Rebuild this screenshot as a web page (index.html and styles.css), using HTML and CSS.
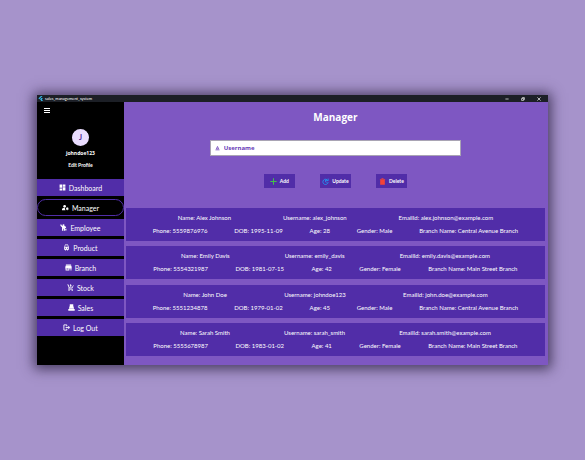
FILE: index.html
```html
<!DOCTYPE html>
<html lang="en">
<head>
<meta charset="utf-8">
<title>sales_management_system</title>
<link rel="stylesheet" href="styles.css">
</head>
<body>
<div class="window">
  <header class="titlebar">
    <svg class="logo" viewBox="0 0 12 12"><path d="M1 6 7 0h4L3 8zM5 8l3-3h4L9 8l3 4H8z" fill="#35b8e8"/></svg>
    <span class="app-name">sales_management_system</span>
    <button class="win-btn" aria-label="Minimize"><svg viewBox="0 0 10 10"><path d="M1 5h8"/></svg></button>
    <button class="win-btn" aria-label="Restore"><svg viewBox="0 0 10 10"><path d="M1.500 3.500h5v5h-5zM3.500 3.500v-2h5v5h-2"/></svg></button>
    <button class="win-btn" aria-label="Close"><svg viewBox="0 0 10 10"><path d="m1 1 8 8M9 1 1 9"/></svg></button>
  </header>
  <div class="body">
    <aside class="sidebar">
      <button class="menu" aria-label="Menu"><svg viewBox="0 0 18 15"><path d="M0 0h18v3H0zM0 6h18v3H0zM0 12h18v3H0z"/></svg></button>
      <div class="profile">
        <div class="avatar">J</div>
        <div class="user">johndoe123</div>
        <a class="edit" href="#">Edit Profile</a>
      </div>
      <nav class="nav">
        <a href="#"><svg viewBox="0 0 24 24"><path d="M2 2h9v11H2zM2 15h9v7H2zM13 2h9v7h-9zM13 11h9v11h-9z"/></svg>Dashboard</a>
        <a href="#" class="active"><svg viewBox="0 0 24 24"><circle cx="9" cy="8" r="4.500"/><path d="M0 21v-3c0-3 5-5 10-5 0 3 0 6 2 8zM17 11h2l.5 2 2-.5 1 2-1.500 1.500 1.500 1.500-1 2-2-.5-.5 2h-2l-.5-2-2 .5-1-2 1.500-1.500-1.500-1.500 1-2 2 .5z"/></svg>Manager</a>
        <a href="#"><svg viewBox="0 0 24 24"><circle cx="12" cy="4" r="3.500"/><path d="M1 2h4c0 3 2 5 5 5h5c4 0 6 3 6 7h-3l-1-2v11h-4v-7h-2v7H7V11C4 10 1 7 1 2zM18 16h4v6h-4z"/></svg>Employee</a>
        <a href="#"><svg viewBox="0 0 24 24"><path fill-rule="evenodd" d="M7 2h10l3 9v9h-3v2h-3v-2h-4v2H7v-2H4v-9zM8 4l-1 5h10l-1-5zM7 13v3h3v-3zm7 0v3h3v-3z"/></svg>Product</a>
        <a href="#"><svg viewBox="0 0 24 24"><path fill-rule="evenodd" d="M3 2h18v3H3zM2 6h20l1 6v3h-1v7H2v-7H1v-3zM5 15v4h7v-4zM15 15v7h4v-7z"/></svg>Branch</a>
        <a href="#"><svg viewBox="0 0 24 24"><path d="M1 2h4l4 10h8l4-8 2 1-5 10H8l-1 2h13v2H4l2-5L3 4H1zM11 1h3v4h3l-4 5-4-5h2z"/><circle cx="7" cy="21" r="2.500"/><circle cx="18" cy="21" r="2.500"/></svg>Stock</a>
        <a href="#"><svg viewBox="0 0 24 24"><path d="M6 1h12v5l3 10H3L6 6zM1 17h22v6H1z"/></svg>Sales</a>
        <a href="#"><svg viewBox="0 0 24 24"><path class="door" d="M13 3H3v18h10v-5M13 8V3M9 12h13M18 7l5 5-5 5"/></svg>Log Out</a>
      </nav>
    </aside>
    <main class="main">
      <h1>Manager</h1>
      <label class="search">
        <svg viewBox="0 0 24 24"><path d="M2 21h20M6 17l6-13 6 13zM9 12h6" fill="none" stroke="#673ab7" stroke-width="3"/></svg>
        <input type="text" placeholder="Username" aria-label="Username">
      </label>
      <div class="actions">
        <button><svg viewBox="0 0 21 21"><path d="M9 1h3v8h8v3h-8v8H9v-8H1V9h8z" fill="#43c04a"/></svg>Add</button>
        <button><svg viewBox="0 0 24 24"><path d="M21 2v7h-7M20 9a9 9 0 1 0 1 5M12 7v6l4 2" fill="none" stroke="#2196f3" stroke-width="3"/></svg>Update</button>
        <button><svg viewBox="0 0 24 24"><path d="M9 1h6l1 2h5v3H3V3h5zM4 7h16v16H4z" fill="#f44336"/></svg>Delete</button>
      </div>
      <section class="list">
        <article class="card">
          <div class="row"><span>Name: Alex Johnson</span><span>Username: alex_johnson</span><span>EmailId: alex.johnson@example.com</span></div>
          <div class="row"><span>Phone: 5559876976</span><span>DOB: 1995-11-09</span><span>Age: 28</span><span>Gender: Male</span><span>Branch Name: Central Avenue Branch</span></div>
        </article>
        <article class="card">
          <div class="row"><span>Name: Emily Davis</span><span>Username: emily_davis</span><span>EmailId: emily.davis@example.com</span></div>
          <div class="row"><span>Phone: 5554321987</span><span>DOB: 1981-07-15</span><span>Age: 42</span><span>Gender: Female</span><span>Branch Name: Main Street Branch</span></div>
        </article>
        <article class="card">
          <div class="row"><span>Name: John Doe</span><span>Username: johndoe123</span><span>EmailId: john.doe@example.com</span></div>
          <div class="row"><span>Phone: 5551234878</span><span>DOB: 1979-01-02</span><span>Age: 45</span><span>Gender: Male</span><span>Branch Name: Central Avenue Branch</span></div>
        </article>
        <article class="card">
          <div class="row"><span>Name: Sarah Smith</span><span>Username: sarah_smith</span><span>EmailId: sarah.smith@example.com</span></div>
          <div class="row"><span>Phone: 5555678987</span><span>DOB: 1983-01-02</span><span>Age: 41</span><span>Gender: Female</span><span>Branch Name: Main Street Branch</span></div>
        </article>
      </section>
    </main>
  </div>
</div>
</body>
</html>
```
FILE: styles.css
```css
* { box-sizing: border-box; }
body {
  margin: 0;
  min-height: 100vh;
  padding: 95px 37px;
  display: flex;
  background: #a693cb;
  font-family: Lato, "Open Sans", sans-serif;
  font-size: 6px;
  line-height: 8px;
  color: #fff;
}
button, input { font: inherit; color: inherit; border: 0; padding: 0; background: none; }
a { color: inherit; text-decoration: none; }
svg { display: block; fill: #fff; flex: none; }
.window {
  flex: 1;
  display: flex;
  flex-direction: column;
  box-shadow: 0 1px 12px 3px rgba(30, 20, 50, 0.7);
}
.titlebar {
  display: flex;
  align-items: center;
  height: 7px;
  padding: 0 6px 0 1px;
  background: #1c1f26;
}
.logo { width: 5px; height: 5px; }
.app-name { flex: 1; margin-left: 2px; font-size: 4px; line-height: 7px; }
.win-btn { width: 5px; margin-left: 11px; }
.win-btn svg { width: 4px; height: 4px; fill: none; stroke: #ddd; stroke-width: 2; }
.body { flex: 1; display: flex; }
.sidebar { flex: 0 0 17%; background: #000; padding-top: 6px; }
.menu { display: block; margin-left: 7px; }
.menu svg { width: 6px; height: 5px; }
.profile {
  padding-top: 16px;
  text-align: center;
  font-weight: 700;
  font-size: 5px;
}
.avatar {
  width: 17px;
  height: 17px;
  margin: 0 auto 3px;
  border-radius: 50%;
  background: #eaddff;
  color: #4a2094;
  font-size: 7px;
  line-height: 17px;
}
.user { font-family: "Open Sans", sans-serif; }
.edit { display: block; margin-top: 4px; }
.nav { display: flex; flex-direction: column; gap: 3px; margin-top: 10px; }
.nav a {
  display: flex;
  align-items: center;
  justify-content: center;
  gap: 3px;
  height: 17px;
  background: #512da8;
  font-size: 7px;
}
.nav .active { background: #000; border: 1px solid #512da8; border-radius: 9px; }
.nav svg { width: 7px; height: 7px; }
.door { fill: none; stroke: #fff; stroke-width: 3; }
.main {
  flex: 1;
  display: flex;
  flex-direction: column;
  padding: 8px 3px 9px 2px;
  background: #7e57c2;
}
h1 {
  margin: 0;
  font-family: "Open Sans", sans-serif;
  font-size: 10px;
  line-height: 14px;
  text-align: center;
}
.search {
  display: flex;
  align-items: center;
  gap: 4px;
  width: 60%;
  height: 16px;
  margin: 16px auto 0;
  padding: 0 4px;
  background: #fff;
  border: 1px solid #a9a4b4;
}
.search svg { width: 5px; height: 6px; }
.search input {
  flex: 1;
  min-width: 0;
  font-family: "Open Sans", sans-serif;
  font-weight: 700;
  color: #673ab7;
  outline: 0;
}
.search input::placeholder { color: #673ab7; opacity: 1; }
.actions { display: flex; justify-content: center; gap: 25px; margin: 18px 0 20px; }
.actions button {
  display: flex;
  align-items: center;
  justify-content: center;
  gap: 3px;
  min-width: 31px;
  height: 14px;
  background: #512da8;
  font-size: 5px;
  font-weight: 700;
}
.actions svg { width: 7px; height: 7px; }
.list { flex: 1; display: flex; flex-direction: column; justify-content: space-between; }
.card { padding: 6px 0; background: #512da8; }
.row { display: flex; justify-content: space-evenly; white-space: nowrap; }
.row + .row { margin-top: 5px; }
```
